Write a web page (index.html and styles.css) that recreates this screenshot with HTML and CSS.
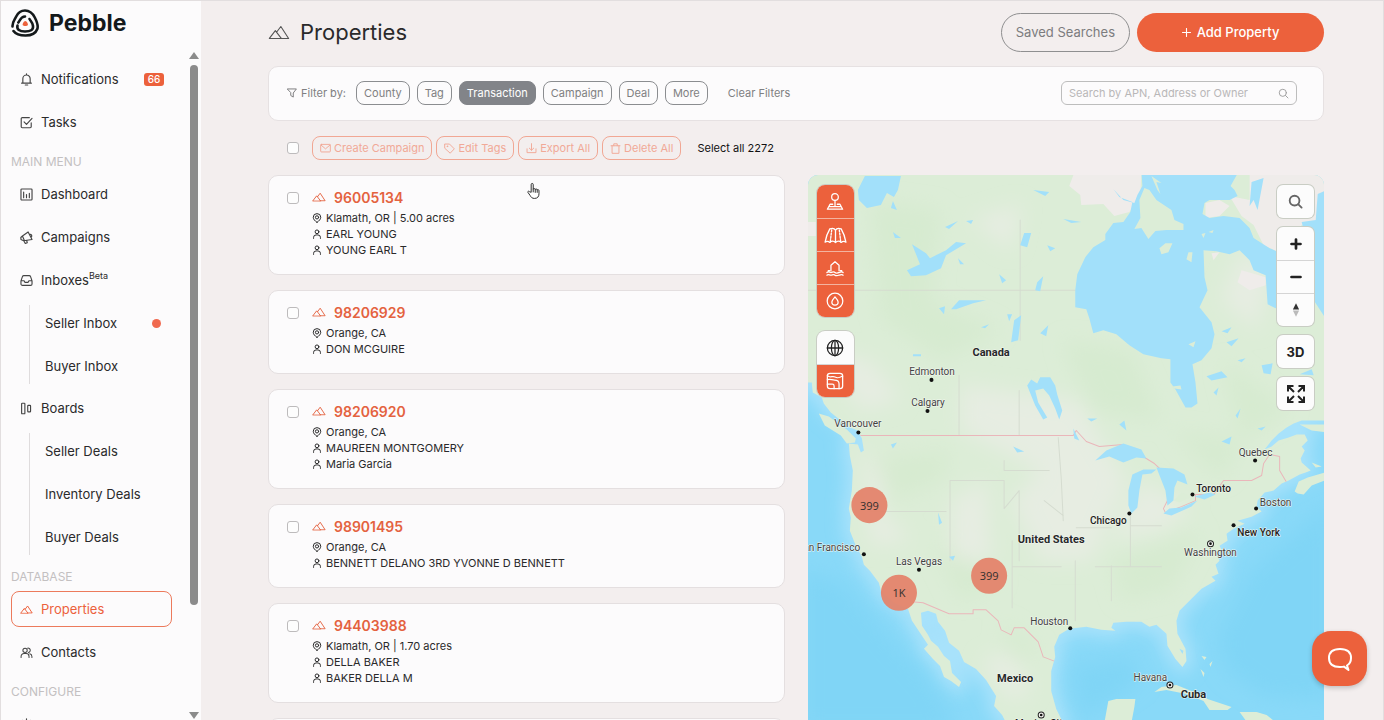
FILE: index.html
```html
<!DOCTYPE html>
<html lang="en">
<head>
<meta charset="utf-8">
<meta name="viewport" content="width=device-width, initial-scale=1">
<title>Pebble – Properties</title>
<link rel="stylesheet" href="styles.css">
</head>
<body>
<svg class="sprite" aria-hidden="true">
  <symbol id="i-mount" viewBox="0 0 24 16"><path d="M1.500 14.500 L8 6 L14.500 14.500 Z M9.500 7.500 L14 1.500 L22.500 14.500 H14"/></symbol>
  <symbol id="i-pin" viewBox="0 0 16 16"><path d="M8 15C4.500 12.500 2 10 2 6.800a6 5.800 0 0 1 12 0C14 10 11.500 12.500 8 15z"/><circle cx="8" cy="7" r="2.600"/></symbol>
  <symbol id="i-user" viewBox="0 0 16 16"><circle cx="8" cy="4.500" r="3"/><path d="M2.500 15v-1.500a4 4 0 0 1 4-4h3a4 4 0 0 1 4 4V15"/></symbol>
  <symbol id="i-search" viewBox="0 0 16 16"><circle cx="7" cy="7" r="5.200"/><path d="M11 11l3.500 3.500"/></symbol>
</svg>

<div class="app">
  <aside class="sidebar">
    <a class="brand" href="#">
      <svg class="brand-mark" viewBox="0 0 28 28" aria-hidden="true">
        <path d="M1.500 17.500C1.200 13 3.500 11 5.200 7.500S9.500 1.500 14 1.500s7.500 2.500 9.800 7 3.800 8 2.500 11.500-5.500 6.500-11.800 6.500-9.500-1-12-4.500"/>
        <path d="M6.500 16.500c-1 4 2 6 7.500 6s8.500-1.500 8-5.500-2.500-5-3.500-7M7.300 13.500c1.700-1.500 2-6 6.700-6"/>
        <path class="brand-dot" d="M14.300 12c1.400 0 3.300 3.300 2.500 4.300-.7.900-4.300.9-5 0-.7-1 1.100-4.300 2.500-4.300z"/>
      </svg>
      <span>Pebble</span>
    </a>
    <nav class="nav">
      <a class="item" href="#"><svg viewBox="0 0 16 16"><path d="M2 12.500h12M3.500 12.500V7a4.500 4.500 0 0 1 9 0v5.500M8 1v1.500M6.500 14.800h3"/></svg>Notifications<span class="badge">66</span></a>
      <a class="item" href="#"><svg viewBox="0 0 16 16"><path d="M13.800 8.500v4.700a1.300 1.300 0 0 1-1.300 1.300h-9.700a1.300 1.300 0 0 1-1.300-1.300V3.300A1.300 1.300 0 0 1 2.800 2h8.700M5 7.300l3 3L14.800 3"/></svg>Tasks</a>
      <h2>MAIN MENU</h2>
      <a class="item" href="#"><svg viewBox="0 0 16 16"><rect x="1.200" y="1.200" width="13.600" height="13.600" rx="1"/><path d="M4.500 5v7M8 8v4M11.500 6.500V12"/></svg>Dashboard</a>
      <a class="item" href="#"><svg viewBox="0 0 16 16"><path d="M10 1.200L14.800 10.500 4.500 12 1.200 10.500 1 8 3 6.200zM5 12.500L6.500 15.300 9 14.500 8.300 12M12.300 4a2 2 0 0 1 1.700 3.200M3 6.200L5.500 12"/></svg>Campaigns</a>
      <a class="item" href="#"><svg viewBox="0 0 16 16"><path d="M1.200 8.500L3 3.200A1.800 1.800 0 0 1 4.700 2h6.600A1.800 1.800 0 0 1 13 3.200l1.800 5.300v3.700a1.800 1.800 0 0 1-1.800 1.800H3a1.800 1.800 0 0 1-1.800-1.800zM1.200 8.300H5l1 2h4l1-2h3.800"/></svg><span>Inboxes<sup>Beta</sup></span></a>
      <div class="sub">
        <a class="item" href="#">Seller Inbox<span class="dot"></span></a>
        <a class="item" href="#">Buyer Inbox</a>
      </div>
      <a class="item" href="#"><svg viewBox="0 0 16 16"><rect x="2" y="1.500" width="4" height="13" rx=".8"/><rect x="9.500" y="4.200" width="3.500" height="8" rx=".8"/></svg>Boards</a>
      <div class="sub">
        <a class="item" href="#">Seller Deals</a>
        <a class="item" href="#">Inventory Deals</a>
        <a class="item" href="#">Buyer Deals</a>
      </div>
      <h2>DATABASE</h2>
      <a class="item active" href="#"><svg viewBox="0 0 24 16"><use href="#i-mount"/></svg>Properties</a>
      <a class="item" href="#"><svg viewBox="0 0 18 16"><circle cx="7" cy="5" r="3"/><path d="M1.500 15v-1.500a4 4 0 0 1 4-4h3a4 4 0 0 1 4 4V15M10.500 2a3 3 0 1 1 1 5.900M13.500 9.800a4 4 0 0 1 3 3.700V15"/></svg>Contacts</a>
      <h2>CONFIGURE</h2>
      <a class="item" href="#" aria-label="Configure"><svg viewBox="0 0 16 16"><circle cx="8" cy="8" r="2.500"/><path d="M8 1v3M8 12v3M1 8h3M12 8h3M3 3l2 2M11 11l2 2M13 3l-2 2M5 11l-2 2"/></svg></a>
    </nav>
    <div class="scrollbar" aria-hidden="true"><i class="up"></i><i class="thumb"></i><i class="down"></i></div>
  </aside>

  <main class="main">
    <header class="head">
      <svg class="head-icon" viewBox="0 0 24 16"><use href="#i-mount"/></svg>
      <h1>Properties</h1>
      <button class="pill" type="button">Saved Searches</button>
      <button class="pill primary" type="button"><svg viewBox="0 0 10 10"><path d="M5 .5v9M.5 5h9"/></svg>Add Property</button>
    </header>

    <section class="filters">
      <span class="filter-label"><svg viewBox="0 0 16 16"><path d="M1 1.500h14L10 8v6.500L6 12V8z"/></svg>Filter by:</span>
      <button class="chip" type="button">County</button>
      <button class="chip" type="button">Tag</button>
      <button class="chip on" type="button">Transaction</button>
      <button class="chip" type="button">Campaign</button>
      <button class="chip" type="button">Deal</button>
      <button class="chip" type="button">More</button>
      <button class="clear" type="button">Clear Filters</button>
      <label class="search"><input type="text" aria-label="Search properties" placeholder="Search by APN, Address or Owner"><svg viewBox="0 0 16 16"><use href="#i-search"/></svg></label>
    </section>

    <div class="bulk">
      <input type="checkbox" aria-label="Select page">
      <button class="act" type="button"><svg viewBox="0 0 16 16"><rect x="1" y="2" width="14" height="11" rx="1"/><path d="M1.500 3L8 8.500 14.500 3"/></svg>Create Campaign</button>
      <button class="act" type="button"><svg viewBox="0 0 16 16"><path d="M1.500 1.500H8L15 8.500 9 14.800 1.500 8z"/><circle cx="4.800" cy="4.800" r=".6"/></svg>Edit Tags</button>
      <button class="act" type="button"><svg viewBox="0 0 16 16"><path d="M1.500 8.500V14h13V8.500M8 1v9.500M4.800 7.500L8 10.500l3.200-3"/></svg>Export All</button>
      <button class="act" type="button"><svg viewBox="0 0 16 16"><path d="M1.500 4h13M3 4v11h10V4M5.500 4V1.200h5V4"/></svg>Delete All</button>
      <span class="all">Select all 2272</span>
    </div>

    <div class="cols">
      <div class="list">
        <article class="card"><input type="checkbox" aria-label="Select 96005134"><div>
          <a class="apn" href="#"><svg viewBox="0 0 24 16"><use href="#i-mount"/></svg>96005134</a>
          <p class="place"><svg viewBox="0 0 16 16"><use href="#i-pin"/></svg>Klamath, OR | 5.00 acres</p>
          <p><svg viewBox="0 0 16 16"><use href="#i-user"/></svg>EARL YOUNG</p>
          <p><svg viewBox="0 0 16 16"><use href="#i-user"/></svg>YOUNG EARL T</p></div></article>
        <article class="card"><input type="checkbox" aria-label="Select 98206929"><div>
          <a class="apn" href="#"><svg viewBox="0 0 24 16"><use href="#i-mount"/></svg>98206929</a>
          <p class="place"><svg viewBox="0 0 16 16"><use href="#i-pin"/></svg>Orange, CA</p>
          <p><svg viewBox="0 0 16 16"><use href="#i-user"/></svg>DON MCGUIRE</p></div></article>
        <article class="card"><input type="checkbox" aria-label="Select 98206920"><div>
          <a class="apn" href="#"><svg viewBox="0 0 24 16"><use href="#i-mount"/></svg>98206920</a>
          <p class="place"><svg viewBox="0 0 16 16"><use href="#i-pin"/></svg>Orange, CA</p>
          <p><svg viewBox="0 0 16 16"><use href="#i-user"/></svg>MAUREEN MONTGOMERY</p>
          <p><svg viewBox="0 0 16 16"><use href="#i-user"/></svg>Maria Garcia</p></div></article>
        <article class="card"><input type="checkbox" aria-label="Select 98901495"><div>
          <a class="apn" href="#"><svg viewBox="0 0 24 16"><use href="#i-mount"/></svg>98901495</a>
          <p class="place"><svg viewBox="0 0 16 16"><use href="#i-pin"/></svg>Orange, CA</p>
          <p><svg viewBox="0 0 16 16"><use href="#i-user"/></svg>BENNETT DELANO 3RD YVONNE D BENNETT</p></div></article>
        <article class="card"><input type="checkbox" aria-label="Select 94403988"><div>
          <a class="apn" href="#"><svg viewBox="0 0 24 16"><use href="#i-mount"/></svg>94403988</a>
          <p class="place"><svg viewBox="0 0 16 16"><use href="#i-pin"/></svg>Klamath, OR | 1.70 acres</p>
          <p><svg viewBox="0 0 16 16"><use href="#i-user"/></svg>DELLA BAKER</p>
          <p><svg viewBox="0 0 16 16"><use href="#i-user"/></svg>BAKER DELLA M</p></div></article>
        <article class="card"></article>
      </div>

      <section class="map" aria-label="Property map">
        <svg class="map-canvas" viewBox="807 175 516 544" preserveAspectRatio="xMidYMin slice">
          <defs>
            <filter id="soft" x="-30%" y="-30%" width="160%" height="160%"><feGaussianBlur stdDeviation="10"/></filter>
            <filter id="shelf" x="-20%" y="-20%" width="140%" height="140%"><feGaussianBlur stdDeviation="8"/></filter>
            <path id="land" d="M800 170H1325V420H1300L1292 423 1285 427 1277 433 1270 440 1263 449 1270 446 1277 440 1287 437 1295 434 1303 434 1306 440 1300 446 1303 450 1299 458 1300 462 1309 470 1304 472 1298 474 1287 480 1280 483 1272 490 1263 492 1256 500 1255 506 1260 511 1250 516 1236 520 1243 523 1232 528 1225 533 1226 540 1218 545 1221 551 1214 552 1218 560 1214 564 1217 573 1210 576 1214 580 1200 588 1190 598 1178 610 1175 620 1176 633 1184 648 1185 660 1181 666 1174 658 1166 645 1165 633 1155 624 1148 626 1140 621 1125 621 1112 622 1110 627 1114 630 1100 629 1085 626 1068 628 1058 634 1053 646 1054 656 1050 670 1050 690 1055 708 1062 722H1005L1001 714 993 705 995 695 985 679 975 668 963 661 958 650 948 642 944 630 937 621 935 613 927 610 920 612 921 625 927 634 930 640 937 646 943 655 949 660 951 672 960 681 958 686 950 680 943 676 939 665 932 658 923 648 927 644 919 632 911 620 907 608 893 602 880 590 878 582 869 570 863 564 861 556 855 545 849 530 850 517 848 508 851 490 852 470 849 455 848 443 857 444 860 452 863 450 861 438 857 430 849 427 840 420 830 412 823 403 821 397 812 392 811 382H800Z"/>
            <clipPath id="landclip"><use href="#land"/></clipPath>
          </defs>
          <rect class="sea" x="800" y="170" width="530" height="560"/>
          <use href="#land" class="shelf" filter="url(#shelf)"/>
          <path class="deep" filter="url(#soft)" d="M1215 640L1250 570 1330 500V700L1260 695 1225 670ZM800 570L840 580 880 625 930 680 960 730H800ZM1070 665L1130 655 1140 680 1080 720Z"/>
          <use href="#land" class="land"/>
          <g clip-path="url(#landclip)">
            <g filter="url(#soft)">
              <path class="pale" d="M960 385L1080 400 1100 440 1125 480 1090 560 1040 560 1010 500 1040 470 960 430ZM860 450L890 470 880 510 910 540 870 545ZM970 220L1020 205 1010 250ZM1240 250L1270 270 1255 330 1220 300ZM820 350L870 360 900 400 860 410ZM1140 480L1190 510 1160 530 1110 540ZM950 500L985 480 990 560 950 560ZM1010 650L1030 690 1010 700 980 660Z"/>
              <path class="lush" d="M870 200L940 210 930 300 1000 330 940 360 880 320ZM1060 340L1130 350 1160 420 1090 410ZM870 460L950 450 940 480 890 500ZM1110 560L1200 530 1170 590 1120 600ZM930 540L1000 580 960 600ZM1000 620L1040 650 1010 660ZM1220 360L1290 410 1240 440ZM1170 430L1240 440 1220 480Z"/>
            </g>
            <path class="tundra" d="M1074 170H1140L1139 195 1128 212 1113 216 1102 204 1080 205 1079 195 1068 186ZM1204 203L1218 200 1228 206 1218 216 1204 218ZM1248 170H1325V225H1300L1277 252 1262 245 1252 225 1240 216 1228 196 1248 200ZM1240 270L1264 277 1264 285 1248 290 1236 282ZM807 222H815V236H807ZM1210 253L1218 252 1212 260Z"/>
            <path class="state" d="M1019 220V340M807 290H1074M958 375V434M1018 390V434M1057 437L1060 478M949 480H1003V508M867 511H945M949 480V560M1003 460V470H1048M1003 508L1018 490V560M1011 540V607M1011 566H1060M1043 500L1062 515M1060 478L1062 520M1075 527H1110M1129 515V565M1074 560V620M1094 566H1160M1129 525H1160M1110 565V600"/>
            <path class="border" d="M857 435H1072L1075 430 1085 441 1098 446 1122 444 1140 455 1153 463 1166 475 1170 492 1162 508 1164 512 1180 506 1194 500V494H1212L1222 480H1250L1260 475 1262 463 1268 454 1278 456V470L1285 482"/>
            <path class="border" d="M848 440L857 443M911 601L922 602 948 613H972V609H985L997 620 1000 629 1010 634 1013 627H1023L1037 641 1042 656 1055 661"/>
          </g>
          <g class="lake">
            <path d="M1140 170L1141 186 1136 195 1133 203 1122 200 1112 189 1118 197 1131 202 1129 212 1122 222 1112 223 1104 234 1104 240 1092 247 1084 257 1076 274 1074 290 1074 307 1085 309 1088 318 1092 333 1102 330 1115 334 1128 345 1142 354 1160 358 1169 359V382L1174 389 1184 407H1190L1196 403 1194 382 1191 364 1200 360 1210 348 1213 334 1210 322 1198 307 1206 290 1203 277 1202 250 1215 251 1228 254 1238 250 1248 260 1252 270 1264 275 1266 304 1274 308 1277 305 1312 300 1325 320V190L1316 194 1314 220 1300 222 1301 226 1312 240 1277 252 1268 248 1252 238 1248 228 1238 218 1222 216 1208 218 1201 214 1203 203 1208 200 1228 200 1236 196 1233 190 1229 186 1238 170Z"/>
            <path d="M857 190L864 176H900L897 190 893 197 886 193 880 205 866 208 858 200ZM892 201L896 210 890 208ZM911 244L925 253 929 258 945 250 955 242 965 243 945 255 940 268 925 275 910 276 906 270 919 264ZM950 309L958 300 985 300 972 303 955 309ZM1023 233L1030 233 1026 247 1019 245ZM1032 190L1048 192 1044 196ZM1062 219L1080 222 1070 223ZM944 227L957 221 948 229ZM965 221L972 220 970 224ZM892 232L900 238 894 238ZM1046 245L1054 248 1049 251ZM1036 282L1042 276 1039 291 1034 290ZM998 274L1005 280 1001 283ZM1013 320L1020 315 1017 340 1010 342ZM1006 314L1011 314 1008 321ZM980 327L988 324 984 328ZM1039 333L1047 325 1045 336ZM957 258L963 264 959 264ZM912 354H920V356H912ZM938 308L944 306 943 314ZM1026 385L1030 379 1036 383 1039 377 1049 377 1054 385 1056 394 1061 410 1058 419 1054 408 1048 395 1042 388 1034 390 1037 402 1046 417 1042 419 1034 405Z M937 512L941 522 938 524ZM1012 446L1023 451 1016 452ZM1072 428L1078 440 1073 438Z"/>
            <path d="M1094 460L1105 450 1122 443 1140 449 1145 458 1135 457 1122 462 1108 456ZM1127 490L1131 474 1142 469 1155 469 1150 473 1141 474 1138 490 1136 507 1130 513 1127 505ZM1155 467L1172 468 1183 474 1186 484 1176 480 1173 487 1172 500 1166 505 1164 490ZM1162 513L1168 508 1180 507 1196 500 1190 506 1170 515ZM1193 496L1208 492 1214 494 1203 499ZM1220 331L1230 327 1226 333ZM1225 342L1237 338 1230 346ZM1205 376L1220 371 1226 377 1210 380ZM1236 360L1244 358 1240 362ZM1260 365L1271 363 1269 374 1262 373ZM1234 415L1239 408 1236 418ZM1212 392L1217 387 1215 395ZM1086 418L1096 418 1090 421ZM1118 424L1123 420 1125 430ZM1220 441L1230 436 1228 444ZM1256 428L1264 426 1260 430ZM1298 374L1310 369 1312 375ZM1250 182L1262 178 1256 210 1252 200 1248 206ZM1178 648L1182 650 1181 653ZM948 556L954 555 952 560ZM890 444L896 442 892 448Z"/>
          </g>
          <g class="isle">
            <path d="M1143 188L1148 190 1155 200 1170 210 1173 220 1182 224V230L1165 230 1154 231 1147 239 1140 228 1133 229 1139 218 1138 200ZM1158 248L1164 243 1171 243 1167 252 1160 254ZM1187 252L1191 252 1190 262 1185 259ZM1200 234L1204 233 1202 238ZM1207 232L1212 230 1211 233ZM1187 344L1194 341 1192 347ZM1171 386L1179 385 1180 389 1173 388ZM1150 176L1156 190 1159 194 1155 182 1160 183Z"/>
            <path d="M818 413L828 416 846 429 855 438 854 442 846 443 840 435 824 425ZM1293 491L1297 481 1306 477 1323 472V480L1310 485 1302 494 1296 493ZM1298 424L1325 424V432L1310 430ZM1310 462L1320 466 1314 467ZM1172 500L1180 492 1190 496 1178 502Z"/>
            <path d="M1107 700L1115 698 1134 698 1133 706 1130 722H1103ZM1153 691L1160 686 1175 684 1190 690 1206 698 1230 706 1226 709 1208 709 1202 700 1185 693 1165 689ZM1238 711L1255 711 1265 714 1275 722H1246ZM1200 655L1205 656 1203 659ZM1199 668L1203 672 1202 676ZM1208 663L1211 660 1209 666Z"/>
          </g>
          <g class="pts">
            <circle cx="930.500" cy="379.500" r="2"/><circle cx="926.500" cy="410.500" r="2"/><circle cx="857.500" cy="432" r="2"/><circle cx="863" cy="553.500" r="2"/><circle cx="918" cy="569" r="2"/><circle cx="1069" cy="627.500" r="2"/><circle cx="1128" cy="513" r="2"/><circle cx="1191" cy="494" r="2"/><circle cx="1253.500" cy="460" r="2"/><circle cx="1254.500" cy="508" r="2"/><circle cx="1232" cy="524.500" r="2"/>
          </g>
          <g class="caps">
            <circle cx="1209" cy="543" r="3"/><circle cx="1168.500" cy="684" r="3"/><circle cx="1040" cy="714" r="3"/>
          </g>
          <g class="pts"><circle cx="1209" cy="543" r="1.300"/><circle cx="1168.500" cy="684" r="1.300"/><circle cx="1040" cy="714" r="1.300"/></g>
          <g class="country" text-anchor="middle"><text x="990" y="356">Canada</text><text x="1050" y="542">United States</text><text x="1014" y="681">Mexico</text><text x="1192" y="697">Cuba</text></g>
          <g class="metro" text-anchor="middle"><text x="1107" y="523">Chicago</text><text x="1212" y="491">Toronto</text><text x="1257" y="535">New York</text><text x="1040" y="726">Mexico City</text></g>
          <g class="city" text-anchor="middle"><text x="931" y="375">Edmonton</text><text x="927" y="406">Calgary</text><text x="857" y="427">Vancouver</text><text x="828" y="550">San Francisco</text><text x="918" y="564">Las Vegas</text><text x="1048" y="624">Houston</text><text x="1254" y="455">Quebec</text><text x="1274" y="505">Boston</text><text x="1209" y="555">Washington</text><text x="1149" y="680">Havana</text></g>
          <g class="cluster" text-anchor="middle">
            <circle cx="868.500" cy="504.500" r="18"/><text x="868.500" y="509">399</text>
            <circle cx="988" cy="575" r="18"/><text x="988" y="579">399</text>
            <circle cx="898" cy="592" r="18"/><text x="898" y="596">1K</text>
          </g>
        </svg>

        <div class="tools left">
          <div class="group orange">
            <button type="button" aria-label="Parcel pins"><svg viewBox="0 0 20 20"><circle cx="10" cy="4.500" r="3.700"/><path d="M10 8.200V15M7.500 12.500H4.500L1.500 18h17L15.500 12.500h-3M3.500 15.200h13"/></svg></button>
            <button type="button" aria-label="Terrain"><svg class="wide" viewBox="0 0 24 18"><path d="M6 2C8.500 1 11 1.500 12 3.500 13 1.500 15.500 1 18 2c1.500 2.500 4 8 5 14-1.500-1-3.500-1-5 .3-1.500-1.300-4-1.800-6 .2-2-2-4.500-1.500-6-.2-1.500-1.300-3.500-1.300-5-.3C2 10 4.500 4.500 6 2zM12 3.500v13"/><path stroke-dasharray="2 1.500" d="M8 3L6.500 15.500M16 3l1.500 12.500"/></svg></button>
            <button type="button" aria-label="Flood zones"><svg viewBox="0 0 20 20"><path d="M5.500 13V7L10 3l4.500 4v6M4 13H2.500M16 13h1.500M1 15c1.500-1.500 3 0 4.500 0s3-1.500 4.500 0 3 0 4.500 0 3-1.500 4.500 0M1 18c1.500-1.500 3 0 4.500 0s3-1.500 4.500 0 3 0 4.500 0 3-1.500 4.500 0"/></svg></button>
            <button type="button" aria-label="Water"><svg viewBox="0 0 20 20"><circle cx="10" cy="10" r="8.700"/><path d="M10 5.500c2 2.300 3.500 3.800 3.500 5.500a3.500 3.500 0 0 1-7 0C6.500 9.300 8 7.800 10 5.500z"/></svg></button>
          </div>
          <div class="group">
            <button type="button" aria-label="Globe"><svg viewBox="0 0 20 20"><circle cx="10" cy="10" r="8.500"/><ellipse cx="10" cy="10" rx="4" ry="8.500"/><path d="M10 1.500v17M1.500 10h17"/></svg></button>
            <button class="fill" type="button" aria-label="Layers"><svg viewBox="0 0 20 20"><rect x="1.500" y="1.500" width="17" height="17" rx="3"/><path d="M1.500 4c3 3 6 0 8.500 1.500s4 1.500 8.500-1M1.500 8.500c3-1 5 .5 8 .5s5 1.500 5 4v5.500M1.500 13.500H7c1.500 0 2 1 2 2v3"/></svg></button>
          </div>
        </div>
        <div class="tools right">
          <div class="group"><button type="button" aria-label="Search map"><svg class="mag" viewBox="0 0 16 16"><use href="#i-search"/></svg></button></div>
          <div class="group">
            <button type="button" aria-label="Zoom in"><svg class="bold" viewBox="0 0 20 20"><path d="M10 5v10M5 10h10"/></svg></button>
            <button type="button" aria-label="Zoom out"><svg class="bold" viewBox="0 0 20 20"><path d="M5 10h10"/></svg></button>
            <button type="button" aria-label="Reset north"><svg class="north" viewBox="0 0 20 20"><path d="M6.500 9.500l3.500-7 3.500 7z"/><path class="south" d="M6.500 10.500l3.500 7 3.500-7z"/></svg></button>
          </div>
          <div class="group"><button class="three" type="button">3D</button></div>
          <div class="group"><button type="button" aria-label="Fullscreen"><svg class="full" viewBox="0 0 20 20"><path d="M2 7.500V2h5.500M2 2l6 6M12.500 2H18v5.500M18 2l-6 6M2 12.500V18h5.500M2 18l6-6M18 12.500V18h-5.500M18 18l-6-6"/></svg></button></div>
        </div>
      </section>
    </div>
  </main>
</div>

<button class="chat" type="button" aria-label="Open chat"><svg viewBox="0 0 26 24"><path d="M20 18.500C22.500 17 24 14.500 24 11c0-6-3-9-11-9S2 5 2 11s3 9 11 9c1.500 0 3 0 4-.4L21.500 23z"/></svg></button>
<svg class="pointer" viewBox="0 0 14 18" aria-hidden="true"><path d="M4.500 10V2a1.100 1.100 0 0 1 2.200 0v5c.3-.8 2-.8 2.200.3.300-.8 2-.6 2.100.5.400-.6 1.900-.4 1.900.8V12c0 3-1.500 5-4.900 5-2.500 0-3.500-1.200-4.500-3L1 10.500c-.5-1 .6-1.900 1.500-1z"/><path d="M8.900 7.500v3M11 8v2.500M6.700 7v3"/></svg>
</body>
</html>
```

FILE: styles.css
```css
* { box-sizing: border-box; }
body {
  margin: 0;
  font-family: Inter, "Liberation Sans", sans-serif;
  font-size: 11px;
  color: #2a2a2b;
  background: #f3eeee;
  overflow: hidden;
}
h1, h2, p { margin: 0; font-weight: 400; }
a { color: inherit; text-decoration: none; }
button, input { font: inherit; color: inherit; margin: 0; }
button { padding: 0; border: 0; background: none; cursor: pointer; white-space: nowrap; }
svg { fill: none; stroke: currentColor; stroke-linejoin: round; stroke-linecap: round; flex: none; }
.sprite { position: absolute; width: 0; height: 0; }

.app {
  display: flex;
  height: 100vh;
  border: 1px solid #e2dedf;
  border-bottom: 0;
}

/* Sidebar */
.sidebar {
  position: relative;
  flex: none;
  width: 200px;
  padding: 7px 29px 0 10px;
  background: #fcfbfc;
  overflow: hidden;
}
.brand { display: flex; align-items: center; gap: 10px; height: 30px; font-size: 23px; font-weight: 700; color: #14191b; }
.brand-mark { width: 28px; height: 28px; stroke-width: 2.6; }
.brand-mark .brand-dot { fill: #ec613c; stroke: none; }
.nav { padding-top: 23px; }
.item {
  display: flex;
  align-items: center;
  gap: 8px;
  height: 36px;
  margin-bottom: 7px;
  padding: 0 7px 0 8px;
  border: 1px solid transparent;
  border-radius: 8px;
  font-size: 13px;
}
.item > svg { width: 13px; height: 13px; stroke-width: 1.4; color: #444; }
.item sup { font-size: 9px; line-height: 0; vertical-align: 6px; }
.nav h2 { height: 20px; margin: 12px 0 4px; line-height: 20px; font-size: 12px; color: #c3c0c1; }
.badge { margin-left: auto; width: 20px; border-radius: 3px; background: #ec613c; color: #fff; font-size: 10px; font-weight: 500; line-height: 13px; text-align: center; }
.sub { margin: 0 0 6px 18px; border-left: 1px solid #dfdcdd; }
.sub .item { padding-left: 14px; }
.sub .item:last-child { margin-bottom: 0; }
.dot { margin-left: auto; width: 9px; height: 9px; margin-right: 3px; border-radius: 50%; background: #f0694f; }
.item.active { border-color: #ec7a5c; color: #ec613c; }
.item.active > svg { color: #ec613c; stroke-width: 1.8; }
.scrollbar { position: absolute; top: 51px; right: 2px; bottom: 1px; display: flex; flex-direction: column; align-items: center; width: 10px; }
.scrollbar .up { border: 5px solid transparent; border-top: 0; border-bottom: 7px solid #8b8b8b; }
.scrollbar .down { margin-top: auto; border: 5px solid transparent; border-bottom: 0; border-top: 7px solid #8b8b8b; }
.scrollbar .thumb { width: 8px; height: 81%; margin-top: 6px; border-radius: 4px; background: #8b8b8b; }

/* Main */
.main { flex: 1; min-width: 0; display: flex; flex-direction: column; padding: 11px 59px 0 67px; }
.head { display: flex; align-items: center; height: 40px; }
.head-icon { width: 22px; height: 15px; stroke-width: 1.2; color: #555; }
.head h1 { margin: 0 auto 0 10px; font-size: 22px; }
.pill { height: 39px; border: 1px solid #8f8f90; border-radius: 20px; padding: 0 14px; font-size: 13px; color: #7c7c7e; }
.pill.primary { display: flex; align-items: center; justify-content: center; gap: 6px; width: 187px; margin-left: 7px; border: 0; background: #ec613c; color: #fff; font-weight: 500; }
.pill svg { width: 9px; height: 9px; stroke-width: 1.2; }

.filters {
  display: flex;
  align-items: center;
  gap: 7px;
  height: 55px;
  margin-top: 14px;
  padding: 0 26px 1px 18px;
  border: 1px solid #e6e1e2;
  border-radius: 10px;
  background: #fcfbfc;
  color: #7f7f81;
}
.filter-label { display: flex; align-items: center; gap: 4px; margin-right: 3px; }
.filter-label svg { width: 10px; height: 10px; stroke-width: 1.6; }
.chip { height: 24px; padding: 0 7px; border: 1px solid #8b8d90; border-radius: 8px; }
.chip.on { background: #828489; border-color: #828489; color: #fff; }
.clear { margin-left: 13px; }
.search { display: flex; align-items: center; width: 236px; height: 24px; margin-left: auto; padding: 0 7px; border: 1px solid #bdbdbd; border-radius: 6px; }
.search input { flex: 1; min-width: 0; padding: 0; border: 0; outline: 0; background: none; }
.search input::placeholder { color: #b9b7b8; opacity: 1; }
.search svg { width: 11px; height: 11px; stroke-width: 1.3; color: #999; }

input[type="checkbox"] { appearance: none; width: 12px; height: 12px; border: 1px solid #bdbbbc; border-radius: 3px; background: #fdfdfd; }
.bulk { display: flex; align-items: center; gap: 4px; height: 24px; margin: 15px 0 15px 19px; }
.bulk input { margin-right: 9px; }
.act { display: flex; align-items: center; gap: 3px; height: 24px; padding: 0 7px; border: 1px solid #f1a794; border-radius: 8px; color: #f1a997; }
.act svg { width: 11px; height: 11px; stroke-width: 1.4; }
.all { margin-left: 12px; color: #111; }

.cols { flex: 1; min-height: 0; display: grid; grid-template-columns: 1fr 1fr; gap: 23px; }
.list { display: flex; flex-direction: column; gap: 15px; overflow: hidden; }
.card { display: flex; flex: none; gap: 13px; padding: 9px 18px 16px; border: 1px solid #e4dfe0; border-radius: 10px; background: #fcfbfc; }
.card input { flex: none; margin-top: 7px; }
.apn { display: flex; align-items: center; gap: 8px; height: 24px; font-size: 14px; font-weight: 600; color: #e4623f; }
.apn svg { width: 14px; height: 10px; stroke-width: 1.6; }
.card p { display: flex; align-items: center; gap: 4px; height: 16px; }
.card p.place { height: 17px; }
.card p svg { width: 10px; height: 10px; stroke-width: 1.6; }

/* Map */
.map { position: relative; border-radius: 10px 10px 0 0; overflow: hidden; }
.map-canvas { display: block; width: 100%; height: 100%; stroke: none; font-family: Roboto, sans-serif; }
.sea { fill: #89d9f8; }
.shelf { fill: #a8e2fb; stroke: #a8e2fb; stroke-width: 14; }
.deep { fill: #80d5f6; }
.land, .isle { fill: #dcedd7; }
.pale { fill: #e8ede3; opacity: .9; }
.lush { fill: #d2eacb; opacity: .6; }
.tundra { fill: #efecea; }
.lake { fill: #a2e0fa; }
.state { fill: none; stroke: #d5dcd0; stroke-width: 1; }
.border { fill: none; stroke: #eab6ba; stroke-width: 1; }
.pts { fill: #111; }
.caps { fill: #f4f4f0; stroke: #222; stroke-width: 1; }
.map-canvas text { paint-order: stroke; stroke: #f4f8f0; stroke-width: 1; }
.city { font-size: 10px; fill: #3f4142; }
.metro { font-size: 10px; font-weight: 500; fill: #222; }
.country { font-size: 11px; font-weight: 700; fill: #26282a; }
.cluster { fill: #e4846b; font-family: "Open Sans", sans-serif; font-size: 11px; }
.cluster circle { opacity: .95; }
.map-canvas .cluster text { fill: #33302f; stroke: none; }

.tools { position: absolute; display: flex; flex-direction: column; }
.tools.left { top: 10px; left: 9px; gap: 14px; }
.tools.right { top: 10px; right: 10px; gap: 9px; }
.group { display: flex; flex-direction: column; width: 37px; border-radius: 6px; overflow: hidden; background: #fcfcfc; box-shadow: 0 0 0 1px #c9cdc4; }
.group button { display: flex; align-items: center; justify-content: center; height: 33px; color: #222; }
.group button + button { border-top: 1px solid #d5d5d5; }
.left .group { border-radius: 8px; }
.group.orange button, .group .fill { background: #ec613c; color: #fff; }
.group.orange button + button { border-top-color: #f3b3a0; }
.group svg { width: 18px; height: 18px; stroke-width: 1.4; }
.group svg.wide { width: 23px; height: 17px; }
.group .mag { width: 15px; height: 15px; stroke-width: 2; color: #666; }
.group .bold { stroke-width: 3; }
.group .north { fill: #333; stroke: none; }
.group .south { fill: #bbb; }
.three { font-size: 13px; font-weight: 700; }
.group .full { width: 20px; height: 20px; stroke-width: 2; stroke-linecap: butt; stroke-linejoin: miter; }

.chat { position: fixed; right: 17px; bottom: 34px; display: flex; align-items: center; justify-content: center; width: 55px; height: 55px; border-radius: 19px; background: #ec613c; color: #fff; box-shadow: 0 2px 5px #0003; }
.chat svg { width: 26px; height: 24px; stroke-width: 2; }
.pointer { position: fixed; left: 527px; top: 182px; width: 13px; height: 18px; stroke: #222; stroke-width: 1; fill: #fff; }
```
